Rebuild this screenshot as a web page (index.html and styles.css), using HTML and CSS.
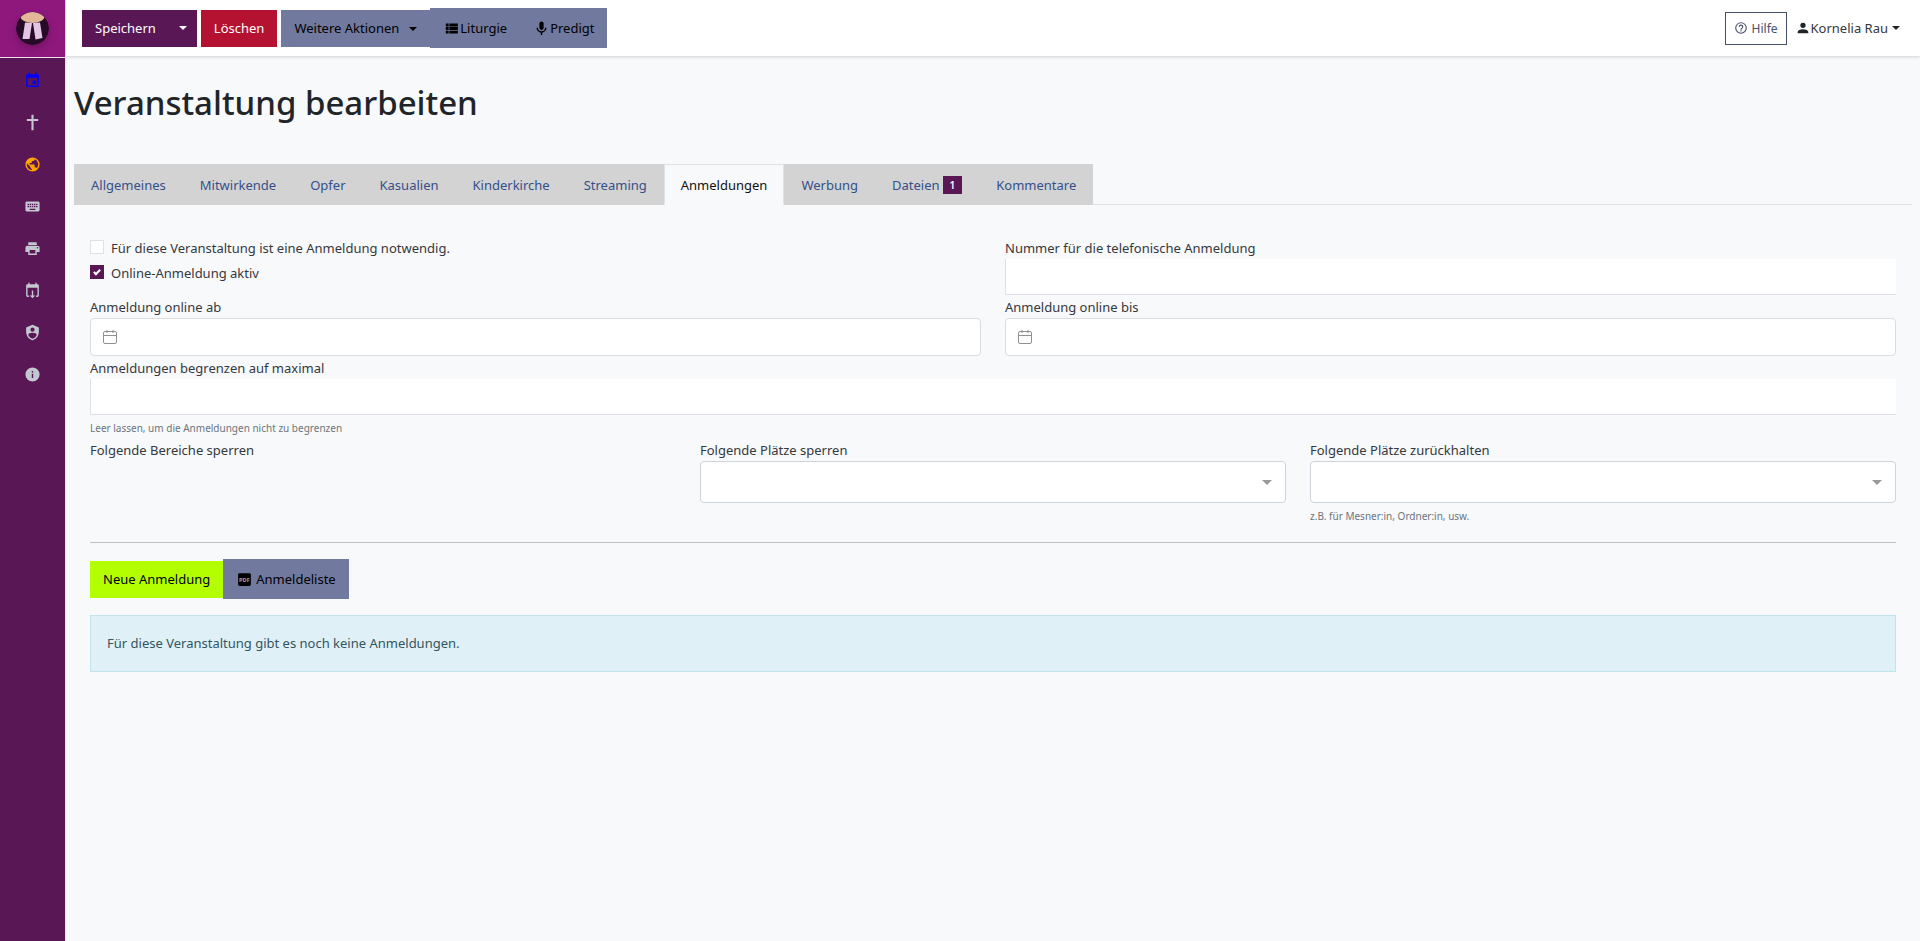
FILE: index.html
```html
<!DOCTYPE html>
<html lang="de">
<head>
    <meta charset="UTF-8">
    <meta name="viewport" content="width=device-width, initial-scale=1.0">
    <title>Veranstaltung bearbeiten</title>
    <link rel="stylesheet" href="styles.css">
</head>
<body>
    <aside class="sidebar">
        <a class="brand" href="#" aria-label="Startseite">
            <svg class="brand-logo" viewBox="0 0 33 33">
                <defs>
                    <clipPath id="logoClip"><circle cx="16.5" cy="16.5" r="16.5"/></clipPath>
                </defs>
                <g clip-path="url(#logoClip)">
                    <rect width="33" height="33" fill="#260a26"/>
                    <ellipse cx="16.5" cy="4.5" rx="12" ry="6.5" fill="#e3b899"/>
                    <path d="M9 10.5 16 11 13.500 27H6.500Z" fill="#e3c5e3"/>
                    <path d="M17 11 24 10.500 26.500 26 19.500 27.500Z" fill="#e3c5e3"/>
                </g>
            </svg>
        </a>
        <nav class="side-nav">
            <a class="side-link is-current" href="#" aria-label="Kalender">
                <svg class="icon" viewBox="0 0 24 24"><path d="M19 19H5V8H19M16 1V3H8V1H6V3H5C3.890 3 3 3.890 3 5V19A2 2 0 0 0 5 21H19A2 2 0 0 0 21 19V5C21 3.890 20.100 3 19 3H18V1M17 12H12V17H17V12Z"/></svg>
            </a>
            <a class="side-link" href="#" aria-label="Gottesdienste">
                <svg class="icon" viewBox="0 0 24 24"><path d="M10.500 1H13.500V7H20V10H13.500V23H10.500V10H4V7H10.500Z"/></svg>
            </a>
            <a class="side-link is-world" href="#" aria-label="Webseite">
                <svg class="icon" viewBox="0 0 24 24"><path d="M17.900,17.390C17.640,16.590 16.890,16 16,16H15V13A1,1 0 0,0 14,12H8V10H10A1,1 0 0,0 11,9V7H13A2,2 0 0,0 15,5V4.590C17.930,5.770 20,8.640 20,12C20,14.080 19.200,15.970 17.900,17.390M11,19.930C7.050,19.440 4,16.080 4,12C4,11.380 4.080,10.780 4.210,10.210L9,15V16A2,2 0 0,0 11,18M12,2A10,10 0 0,0 2,12A10,10 0 0,0 12,22A10,10 0 0,0 22,12A10,10 0 0,0 12,2Z"/></svg>
            </a>
            <a class="side-link" href="#" aria-label="Eingabe">
                <svg class="icon" viewBox="0 0 24 24"><path d="M19,10H17V8H19M19,13H17V11H19M16,10H14V8H16M16,13H14V11H16M16,17H8V15H16M7,10H5V8H7M7,13H5V11H7M8,11H10V13H8M8,8H10V10H8M11,11H13V13H11M11,8H13V10H11M20,5H4C2.890,5 2,5.890 2,7V17A2,2 0 0,0 4,19H20A2,2 0 0,0 22,17V7C22,5.890 21.100,5 20,5Z"/></svg>
            </a>
            <a class="side-link" href="#" aria-label="Ausgabe">
                <svg class="icon" viewBox="0 0 24 24"><path d="M18,3H6V7H18M19,12A1,1 0 0,1 18,11A1,1 0 0,1 19,10A1,1 0 0,1 20,11A1,1 0 0,1 19,12M16,19H8V14H16M19,8H5A3,3 0 0,0 2,11V17H6V21H18V17H22V11A3,3 0 0,0 19,8Z"/></svg>
            </a>
            <a class="side-link" href="#" aria-label="Kalenderexport">
                <svg class="icon" viewBox="0 0 24 24"><path d="M6 1H8V3H16V1H18V3H19A2 2 0 0 1 21 5V19A2 2 0 0 1 19 21H17V19H19V8H5V19H7V21H5A2 2 0 0 1 3 19V5A2 2 0 0 1 5 3H6ZM11 12H13V19H16L12 23 8 19H11Z"/></svg>
            </a>
            <a class="side-link" href="#" aria-label="Administration">
                <svg class="icon" viewBox="0 0 24 24"><path d="M12,1L3,5V11C3,16.550 6.840,21.740 12,23C17.160,21.740 21,16.550 21,11V5L12,1M12,5A3,3 0 0,1 15,8A3,3 0 0,1 12,11A3,3 0 0,1 9,8A3,3 0 0,1 12,5M17.130,17C15.920,18.850 14.110,20.240 12,20.920C9.890,20.240 8.080,18.850 6.870,17C6.530,16.500 6.240,16 6,15.470C6,13.820 8.710,12.470 12,12.470C15.290,12.470 18,13.790 18,15.470C17.760,16 17.470,16.500 17.130,17Z"/></svg>
            </a>
            <a class="side-link" href="#" aria-label="Info">
                <svg class="icon" viewBox="0 0 24 24"><path d="M13,9H11V7H13M13,17H11V11H13M12,2A10,10 0 0,0 2,12A10,10 0 0,0 12,22A10,10 0 0,0 22,12A10,10 0 0,0 12,2Z"/></svg>
            </a>
        </nav>
    </aside>

    <div class="page">
        <header class="topbar">
            <div class="split">
                <button type="button" class="btn btn-primary">Speichern</button>
                <button type="button" class="btn btn-primary btn-toggle" aria-label="Weitere Speicheroptionen"><span class="caret"></span></button>
            </div>
            <button type="button" class="btn btn-danger">Löschen</button>
            <div class="split">
                <button type="button" class="btn btn-light">Weitere Aktionen <span class="caret"></span></button>
                <a class="btn btn-light btn-tall" href="#"><svg class="icon" viewBox="0 0 24 24"><path d="M9,5V9H21V5M9,19H21V15H9M9,14H21V10H9M4,9H8V5H4M4,19H8V15H4M4,14H8V10H4V14Z"/></svg>Liturgie</a>
                <a class="btn btn-light btn-tall" href="#"><svg class="icon" viewBox="0 0 24 24"><path d="M12,2A3,3 0 0,1 15,5V11A3,3 0 0,1 12,14A3,3 0 0,1 9,11V5A3,3 0 0,1 12,2M19,11C19,14.530 16.390,17.440 13,17.930V21H11V17.930C7.610,17.440 5,14.530 5,11H7A5,5 0 0,0 12,16A5,5 0 0,0 17,11H19Z"/></svg>Predigt</a>
            </div>
            <div class="topbar-right">
                <a class="help" href="#"><svg class="icon" viewBox="0 0 24 24"><path d="M11,18H13V16H11V18M12,2A10,10 0 0,0 2,12A10,10 0 0,0 12,22A10,10 0 0,0 22,12A10,10 0 0,0 12,2M12,20C7.590,20 4,16.410 4,12C4,7.590 7.590,4 12,4C16.410,4 20,7.590 20,12C20,16.410 16.410,20 12,20M12,6A4,4 0 0,0 8,10H10A2,2 0 0,1 12,8A2,2 0 0,1 14,10C14,12 11,11.750 11,15H13C13,12.750 16,12.500 16,10A4,4 0 0,0 12,6Z"/></svg>Hilfe</a>
                <button type="button" class="user"><svg class="icon" viewBox="0 0 24 24"><path d="M12,4A4,4 0 0,1 16,8A4,4 0 0,1 12,12A4,4 0 0,1 8,8A4,4 0 0,1 12,4M12,14C16.420,14 20,15.790 20,18V20H4V18C4,15.790 7.580,14 12,14Z"/></svg>Kornelia Rau<span class="caret"></span></button>
            </div>
        </header>

        <main class="content">
            <h1>Veranstaltung bearbeiten</h1>

            <nav class="tabs">
                <a class="tab" href="#">Allgemeines</a>
                <a class="tab" href="#">Mitwirkende</a>
                <a class="tab" href="#">Opfer</a>
                <a class="tab" href="#">Kasualien</a>
                <a class="tab" href="#">Kinderkirche</a>
                <a class="tab" href="#">Streaming</a>
                <a class="tab active" href="#">Anmeldungen</a>
                <a class="tab" href="#">Werbung</a>
                <a class="tab" href="#">Dateien <span class="badge">1</span></a>
                <a class="tab" href="#">Kommentare</a>
            </nav>

            <form class="tab-pane">
                <div class="row">
                    <div class="checks">
                        <label class="check"><input type="checkbox"> Für diese Veranstaltung ist eine Anmeldung notwendig.</label>
                        <label class="check"><input type="checkbox" checked> Online-Anmeldung aktiv</label>
                    </div>
                    <div class="field">
                        <label for="phone">Nummer für die telefonische Anmeldung</label>
                        <input type="text" id="phone" class="text-input">
                    </div>
                </div>
                <div class="row">
                    <div class="field">
                        <label for="from">Anmeldung online ab</label>
                        <div class="date">
                            <svg class="date-icon" viewBox="0 0 16 16"><rect x="1.500" y="2.500" width="13" height="12" rx="1.500"/><path d="M1.500 6.500H14.500M5 1V4M11 1V4"/></svg>
                            <input type="text" id="from" class="date-input">
                        </div>
                    </div>
                    <div class="field">
                        <label for="to">Anmeldung online bis</label>
                        <div class="date">
                            <svg class="date-icon" viewBox="0 0 16 16"><rect x="1.500" y="2.500" width="13" height="12" rx="1.500"/><path d="M1.500 6.500H14.500M5 1V4M11 1V4"/></svg>
                            <input type="text" id="to" class="date-input">
                        </div>
                    </div>
                </div>
                <div class="row">
                    <div class="field">
                        <label for="limit">Anmeldungen begrenzen auf maximal</label>
                        <input type="text" id="limit" class="text-input">
                        <small>Leer lassen, um die Anmeldungen nicht zu begrenzen</small>
                    </div>
                </div>
                <div class="row">
                    <div class="field">
                        <span>Folgende Bereiche sperren</span>
                    </div>
                    <div class="field">
                        <label for="blocked">Folgende Plätze sperren</label>
                        <div class="select"><select id="blocked"><option></option></select></div>
                    </div>
                    <div class="field">
                        <label for="reserved">Folgende Plätze zurückhalten</label>
                        <div class="select"><select id="reserved"><option></option></select></div>
                        <small>z.B. für Mesner:in, Ordner:in, usw.</small>
                    </div>
                </div>

                <hr>

                <div class="split">
                    <button type="button" class="btn btn-success">Neue Anmeldung</button>
                    <a class="btn btn-light btn-tall btn-pdf" href="#"><svg class="icon" viewBox="0 0 24 24"><rect x="3" y="3" width="18" height="18" rx="2"/><text class="pdf-label" x="12" y="15" text-anchor="middle">PDF</text></svg>Anmeldeliste</a>
                </div>

                <div class="alert">Für diese Veranstaltung gibt es noch keine Anmeldungen.</div>
            </form>
        </main>
    </div>
</body>
</html>
```
FILE: styles.css
```css
* {
    box-sizing: border-box;
}
body {
    margin: 0;
    display: flex;
    min-height: 100vh;
    font-family: "Noto Sans", sans-serif;
    font-size: 13px;
    line-height: 21px;
    color: #35383c;
    background-color: #f8f9fb;
}
a {
    color: inherit;
    text-decoration: none;
}
button, input, select {
    font: inherit;
    color: inherit;
}
.icon {
    width: 17px;
    height: 17px;
    fill: currentColor;
    flex: none;
}

/* Sidebar */
.sidebar {
    width: 65px;
    flex: none;
    background-color: #5a1755;
}
.brand {
    display: flex;
    align-items: center;
    justify-content: center;
    height: 58px;
    background-color: #8f187d;
    border-bottom: 1px solid #ecdcec;
}
.brand-logo {
    width: 33px;
    height: 33px;
    border-radius: 50%;
    box-shadow: 0 4px 10px rgba(0, 0, 0, 0.2);
}
.side-nav {
    display: flex;
    flex-direction: column;
    padding: 1px 1px 0 0;
}
.side-link {
    display: flex;
    align-items: center;
    justify-content: center;
    height: 42px;
    color: #c2c7d0;
}
.is-current {
    color: #0000ff;
}
.is-world {
    color: #ffa500;
}

/* Topbar */
.page {
    flex: 1;
    min-width: 0;
    border-left: 1px solid #e4e5ea;
}
.topbar {
    display: flex;
    align-items: center;
    gap: 4px;
    height: 56px;
    padding: 0 20px 0 16px;
    background-color: #fff;
    box-shadow: 0 1px 3px rgba(0, 0, 0, 0.16);
}
.topbar-right {
    display: flex;
    align-items: center;
    gap: 8px;
    margin-left: auto;
}
.split {
    display: flex;
    align-items: center;
}
.btn {
    display: flex;
    align-items: center;
    height: 37px;
    padding: 1px 13px 0;
    border: 0;
    color: #000;
    white-space: nowrap;
    cursor: pointer;
}
.btn-primary {
    color: #fff;
    background-color: #5a1755;
}
.btn-toggle {
    padding: 0 10px;
}
.btn-danger {
    color: #fff;
    background-color: #b41230;
}
.btn-light {
    background-color: #71799f;
}
.btn-success {
    background-color: #b3ff00;
}
.btn-tall {
    height: 40px;
}
.btn-pdf .icon {
    margin-right: 3px;
}
.pdf-label {
    font: bold 8px "Noto Sans", sans-serif;
    fill: #9aa1c4;
}
.caret {
    border: 4px solid transparent;
    border-top-color: currentColor;
    border-bottom: 0;
}
.btn-light .caret {
    margin-left: 10px;
}
.help {
    display: flex;
    align-items: center;
    gap: 4px;
    height: 33px;
    padding: 0 8px;
    border: 1px solid #46506b;
    color: #46506b;
    font-size: 12px;
}
.help .icon {
    width: 14px;
    height: 14px;
}
.user {
    display: flex;
    align-items: center;
    padding: 0;
    border: 0;
    background: none;
}
.user .icon {
    width: 16px;
    height: 16px;
    color: #212529;
}
.user .caret {
    margin-left: 4px;
    color: #212529;
}

/* Content */
.content {
    padding: 23px 8px;
}
h1 {
    margin: 0 0 37px;
    font-size: 33px;
    font-weight: 500;
    line-height: 48px;
    color: #212529;
}
.tabs {
    display: flex;
    border-bottom: 1px solid #dee2e6;
}
.tab {
    display: flex;
    align-items: center;
    gap: 3px;
    height: 41px;
    margin-bottom: -1px;
    padding: 1px 16px 0;
    border: 1px solid #d3d3d3;
    background-color: #d3d3d3;
    color: #34508a;
}
.tab.active {
    border-color: #dee2e6 #dee2e6 #f8f9fb;
    background-color: #f8f9fb;
    color: #111;
}
.badge {
    padding: 0 7px;
    background-color: #5a1755;
    color: #fff;
    font-size: 10px;
    font-weight: 600;
    line-height: 18px;
}
.tab-pane {
    padding: 33px 16px;
}
.row {
    display: flex;
    gap: 24px;
    margin-bottom: 2px;
}
.row > * {
    flex: 1;
    min-width: 0;
}
.field {
    display: flex;
    flex-direction: column;
}
.check {
    display: flex;
    gap: 7px;
    height: 25px;
}
.check input {
    position: relative;
    appearance: none;
    width: 14px;
    height: 14px;
    margin: 2px 0 0;
    border: 1px solid #dee2e6;
    background-color: #fff;
}
.check input:checked {
    border-color: #5a1755;
    background-color: #5a1755;
}
.check input:checked::after {
    content: "";
    position: absolute;
    box-sizing: border-box;
    left: 4px;
    top: 2px;
    width: 4px;
    height: 7px;
    border: solid #fff;
    border-width: 0 2px 2px 0;
    transform: rotate(45deg);
}
.text-input {
    height: 36px;
    padding: 0 12px;
    border: 0;
    border-left: 1px solid #dee2e6;
    border-bottom: 1px solid #dee2e6;
    background-color: #fff;
}
.date {
    display: flex;
    align-items: center;
    height: 38px;
    padding-left: 11px;
    border: 1px solid #dcdcdc;
    border-radius: 4px;
    background-color: #fff;
}
.date-icon {
    width: 16px;
    height: 16px;
    fill: none;
    stroke: #8f8f8f;
}
.date-input {
    flex: 1;
    height: 36px;
    border: 0;
    background: none;
}
.select {
    position: relative;
}
.select select {
    display: block;
    appearance: none;
    width: 100%;
    height: 42px;
    padding: 0 12px;
    border: 1px solid #ced4da;
    border-radius: 4px;
    background-color: #fff;
}
.select::after {
    content: "";
    position: absolute;
    right: 14px;
    top: 19px;
    border: 5px solid transparent;
    border-top-color: #999;
    border-bottom: 0;
    pointer-events: none;
}
small {
    margin: 4px 0 1px;
    font-size: 10px;
    line-height: 18px;
    color: #6c757d;
}
hr {
    margin: 16px 0;
    border: 0;
    border-top: 1px solid #bfc0c4;
}
.alert {
    margin-top: 16px;
    padding: 17px 16px;
    border: 1px solid #bee5eb;
    background-color: #dff0f7;
    color: #33555f;
}
```
